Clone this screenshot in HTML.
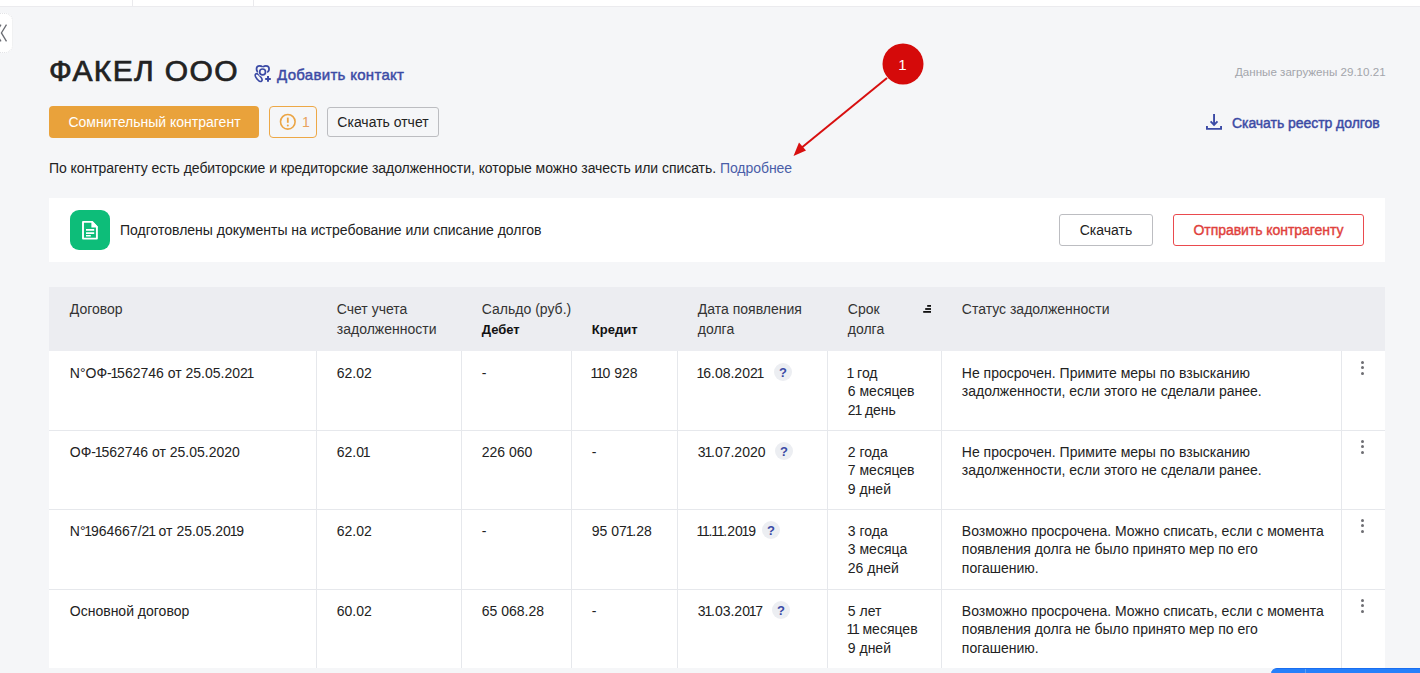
<!DOCTYPE html>
<html><head><meta charset="utf-8"><style>
*{box-sizing:border-box;margin:0;padding:0}
html,body{width:1420px;height:673px;overflow:hidden;background:#f5f6f8;font-family:"Liberation Sans",sans-serif;color:#222}
.abs{position:absolute}
.topbar{left:0;top:0;width:1420px;height:7px;background:#fff;border-bottom:1px solid #ebebee}
.vsep{top:0;width:1px;height:6px;background:#eaeaed}
.backtab{left:-14px;top:13px;width:27px;height:40px;background:#fff;border-radius:8px;border:1px dotted #e2e3e6}
.title{left:49px;top:58px;font-size:30px;color:#222;white-space:nowrap;-webkit-text-stroke:0.7px #222;letter-spacing:1.35px}
.addc{font-size:15px;color:#3b4aa5;white-space:nowrap;-webkit-text-stroke:0.45px #3b4aa5;letter-spacing:0.3px}
.loaded{left:1235px;top:66px;font-size:11.6px;color:#a3a5ab;white-space:nowrap}
.btn-orange{left:49px;top:106px;width:210px;height:32px;background:#e9a23b;border-radius:4px;color:#fff;font-size:14px;text-align:center;line-height:32px;padding-left:1px}
.warn{left:269px;top:106px;width:48px;height:32px;border:1px solid #eda847;border-radius:4px}
.btn-gray{left:327px;top:107px;width:112px;height:30px;border:1px solid #bcbdc1;border-radius:3px;font-size:14px;text-align:center;line-height:28px;color:#222}
.reestr{font-size:14px;color:#3b4aa5;white-space:nowrap;-webkit-text-stroke:0.45px #3b4aa5;letter-spacing:-0.05px}
.para{font-size:14px;white-space:nowrap;color:#222;letter-spacing:-0.05px}
.para span{color:#4a5ea8}
.panel{left:49px;top:198px;width:1336px;height:64px;background:#fff}
.gicon{left:70px;top:210px;width:40px;height:40px;border-radius:9px;background:#0dbd79}
.ptext{left:120px;top:222px;font-size:14px;white-space:nowrap}
.btn-dl{left:1059px;top:214px;width:94px;height:32px;border:1px solid #bcbdc1;border-radius:3px;font-size:14px;text-align:center;line-height:30px}
.btn-send{left:1173px;top:214px;width:191px;height:32px;border:1px solid #ea4a4e;border-radius:3px;font-size:14px;text-align:center;line-height:30px;color:#e0413c;-webkit-text-stroke:0.4px #e0413c;letter-spacing:-0.05px}
.thead{left:49px;top:287px;width:1336px;height:64px;background:#ecedf1}
.tbody{left:49px;top:351px;width:1336px;height:317px;background:#fff}
.th{font-size:14px;color:#333;line-height:20px;white-space:nowrap}
.th b{font-size:13px;color:#111}
.td{font-size:14px;color:#222;line-height:18.3px;white-space:nowrap}
.hl{height:1px;background:#e6e8ec;left:49px;width:1336px}
.vl{width:1px;background:#e6e8ec}
.q{position:absolute;width:18px;height:18px;border-radius:50%;background:#eceef2;color:#3b4aa5;font-weight:bold;font-size:13px;text-align:center;line-height:19px}
.n1{margin-left:-1.2px;letter-spacing:-1.2px}
.dot{position:absolute;width:3px;height:3px;border-radius:50%;background:#6e6e73}
.bluebar{left:1271px;top:668px;width:160px;height:10px;background:#2680fa;border-radius:6px 0 0 0;border-top:1px solid #1a6ef0}
.bluesep{left:1305px;top:669px;width:1px;height:5px;background:#5aa0f5}
</style></head><body>
<div class="abs topbar"></div><div class="abs vsep" style="left:132px"></div><div class="abs vsep" style="left:253px"></div>
<div class="abs backtab"></div>
<svg class="abs" style="left:0;top:10px" width="20" height="46" viewBox="0 0 20 46"><polyline points="6.5,14.7 1.4,22.9 6.5,31.4" fill="none" stroke="#6b6d73" stroke-width="1.3"/><polyline points="1,14.7 -4,22.9 1,31.4" fill="none" stroke="#6b6d73" stroke-width="1.3"/></svg>
<div class="abs title" style="left:49px;top:54px;">ФАКЕЛ ООО</div>
<svg class="abs" style="left:250px;top:60px" width="26" height="26" viewBox="0 0 26 26" fill="none" stroke="#3b4aa5" stroke-width="1.7">
<circle cx="9.7" cy="9.1" r="3.2"/>
<circle cx="15.9" cy="9.1" r="3.2"/>
<ellipse cx="8.6" cy="17.6" rx="4.6" ry="2.1" transform="rotate(50 8.6 17.6)"/>
<circle cx="12.6" cy="11.9" r="4.6" stroke="none" fill="#f5f6f8"/>
<circle cx="12.6" cy="11.9" r="2.9"/>
<path d="M15.2,18.9 H20.8 M18,16.1 V21.7" stroke-width="2"/>
</svg>
<div class="abs addc" style="left:277px;top:65.5px;">Добавить контакт</div>
<div class="abs loaded" style="left:1235px;top:65px;">Данные загружены 29.10.21</div>
<div class="abs btn-orange" style="left:49px;top:106px;">Сомнительный контрагент</div>
<div class="abs warn"></div>
<svg class="abs" style="left:278px;top:112px" width="20" height="20" viewBox="0 0 20 20"><circle cx="9.8" cy="9.8" r="7.3" fill="none" stroke="#eba545" stroke-width="1.6"/><path d="M9.8,5.6 V10.8" stroke="#eba545" stroke-width="1.8"/><circle cx="9.8" cy="13.5" r="1" fill="#eba545"/></svg>
<div class="abs" style="left:302px;top:114px;font-size:14px;color:#e8a25e">1</div>
<div class="abs btn-gray" style="left:327px;top:107px;">Скачать отчет</div>
<svg class="abs" style="left:1200px;top:108px" width="30" height="28" viewBox="0 0 30 28" fill="none" stroke="#3b4aa5" stroke-width="1.9"><path d="M14.05,6 V16.3"/><polyline points="10.6,13.4 14.05,16.9 17.5,13.4"/><polyline points="6.95,18 6.95,20.9 21.05,20.9 21.05,18"/></svg>
<div class="abs reestr" style="left:1232px;top:114.5px;">Скачать реестр долгов</div>
<div class="abs para" style="left:49px;top:160px;">По контрагенту есть дебиторские и кредиторские задолженности, которые можно зачесть или списать. <span>Подробнее</span></div>
<svg class="abs" style="left:780px;top:35px" width="160" height="130" viewBox="0 0 160 130"><line x1="107" y1="43" x2="20" y2="114" stroke="#d80f0f" stroke-width="2"/><polygon points="13.5,121 19,107.5 26,115.5" fill="#d80f0f"/><circle cx="123" cy="29" r="20.5" fill="#d50a0a"/><text x="122.5" y="34.5" font-family="Liberation Sans" font-size="15" fill="#fff" text-anchor="middle">1</text></svg>
<div class="abs panel"></div><div class="abs gicon"></div>
<svg class="abs" style="left:70px;top:210px" width="40" height="40" viewBox="0 0 40 40" fill="none" stroke="#fff"><path d="M13,11.9 H22.2 L26.9,16.8 V28.6 H13 Z" stroke-width="1.9" stroke-linejoin="round"/><path d="M21.4,11.2 H22.4 L27.6,16.6 V17.6 H21.4 Z" fill="#fff" stroke="none"/><path d="M16,19.9 H24.2 M16,23.1 H24.2 M16,25.8 H20.8" stroke-width="1.6"/></svg>
<div class="abs ptext" style="left:120px;top:222px;">Подготовлены документы на истребование или списание долгов</div>
<div class="abs btn-dl" style="left:1059px;top:214px;">Скачать</div>
<div class="abs btn-send" style="left:1173px;top:214px;">Отправить контрагенту</div>
<div class="abs thead"></div><div class="abs tbody"></div>
<div class="abs th" style="left:69.8px;top:299px;">Договор</div>
<div class="abs th" style="left:336.8px;top:299px;">Счет учета<br>задолженности</div>
<div class="abs th" style="left:481.8px;top:299px;">Сальдо (руб.)<br><b>Дебет</b></div>
<div class="abs th" style="left:591.8px;top:299px;"><br><b>Кредит</b></div>
<div class="abs th" style="left:697.8px;top:299px;">Дата появления<br>долга</div>
<div class="abs th" style="left:847.8px;top:299px;">Срок<br>долга</div>
<div class="abs th" style="left:961.8px;top:299px;">Статус задолженности</div>
<svg class="abs" style="left:920px;top:303px" width="14" height="12" viewBox="0 0 14 12" fill="#111"><rect x="7.2" y="2" width="3.8" height="1.8"/><rect x="5.2" y="5.1" width="5.8" height="1.8"/><rect x="3.2" y="8" width="7.8" height="1.8"/></svg>
<div class="abs vl" style="left:316px;top:351px;height:317px"></div>
<div class="abs vl" style="left:461px;top:351px;height:317px"></div>
<div class="abs vl" style="left:571px;top:351px;height:317px"></div>
<div class="abs vl" style="left:677px;top:351px;height:317px"></div>
<div class="abs vl" style="left:827px;top:351px;height:317px"></div>
<div class="abs vl" style="left:941px;top:351px;height:317px"></div>
<div class="abs vl" style="left:1341px;top:351px;height:317px"></div>
<div class="abs hl" style="top:430px"></div>
<div class="abs hl" style="top:509px"></div>
<div class="abs hl" style="top:589px"></div>
<div class="abs td" style="left:69.8px;top:364px;">N°ОФ-<span class="n1">1</span>562746 от 25.05.202<span class="n1">1</span></div>
<div class="abs td" style="left:336.8px;top:364px;">62.02</div>
<div class="abs td" style="left:481.8px;top:364px;">-</div>
<div class="abs td" style="left:591.8px;top:364px;"><span class="n1">1</span><span class="n1">1</span>0 928</div>
<div class="abs td" style="left:697.8px;top:364px;"><span class="n1">1</span>6.08.202<span class="n1">1</span></div>
<div class="abs td" style="left:847.8px;top:364px;"><span class="n1">1</span> год<br>6 месяцев<br>2<span class="n1">1</span> день</div>
<div class="abs td" style="left:961.8px;top:364px;">Не просрочен. Примите меры по взысканию<br>задолженности, если этого не сделали ранее.</div>
<div class="q" style="left:774px;top:362.7px">?</div>
<div class="dot" style="left:1360.5px;top:361.0px"></div>
<div class="dot" style="left:1360.5px;top:365.9px"></div>
<div class="dot" style="left:1360.5px;top:372.0px"></div>
<div class="abs td" style="left:69.8px;top:443px;">ОФ-<span class="n1">1</span>562746 от 25.05.2020</div>
<div class="abs td" style="left:336.8px;top:443px;">62.0<span class="n1">1</span></div>
<div class="abs td" style="left:481.8px;top:443px;">226 060</div>
<div class="abs td" style="left:591.8px;top:443px;">-</div>
<div class="abs td" style="left:697.8px;top:443px;">3<span class="n1">1</span>.07.2020</div>
<div class="abs td" style="left:847.8px;top:443px;">2 года<br>7 месяцев<br>9 дней</div>
<div class="abs td" style="left:961.8px;top:443px;">Не просрочен. Примите меры по взысканию<br>задолженности, если этого не сделали ранее.</div>
<div class="q" style="left:775px;top:441.7px">?</div>
<div class="dot" style="left:1360.5px;top:440.0px"></div>
<div class="dot" style="left:1360.5px;top:444.9px"></div>
<div class="dot" style="left:1360.5px;top:451.0px"></div>
<div class="abs td" style="left:69.8px;top:522px;">N°<span class="n1">1</span>964667/2<span class="n1">1</span> от 25.05.20<span class="n1">1</span>9</div>
<div class="abs td" style="left:336.8px;top:522px;">62.02</div>
<div class="abs td" style="left:481.8px;top:522px;">-</div>
<div class="abs td" style="left:591.8px;top:522px;">95 07<span class="n1">1</span>.28</div>
<div class="abs td" style="left:697.8px;top:522px;"><span class="n1">1</span><span class="n1">1</span>.<span class="n1">1</span><span class="n1">1</span>.20<span class="n1">1</span>9</div>
<div class="abs td" style="left:847.8px;top:522px;">3 года<br>3 месяца<br>26 дней</div>
<div class="abs td" style="left:961.8px;top:522px;">Возможно просрочена. Можно списать, если с момента<br>появления долга не было принято мер по его<br>погашению.</div>
<div class="q" style="left:762px;top:520.7px">?</div>
<div class="dot" style="left:1360.5px;top:519.0px"></div>
<div class="dot" style="left:1360.5px;top:523.9px"></div>
<div class="dot" style="left:1360.5px;top:530.0px"></div>
<div class="abs td" style="left:69.8px;top:602px;">Основной договор</div>
<div class="abs td" style="left:336.8px;top:602px;">60.02</div>
<div class="abs td" style="left:481.8px;top:602px;">65 068.28</div>
<div class="abs td" style="left:591.8px;top:602px;">-</div>
<div class="abs td" style="left:697.8px;top:602px;">3<span class="n1">1</span>.03.20<span class="n1">1</span>7</div>
<div class="abs td" style="left:847.8px;top:602px;">5 лет<br><span class="n1">1</span><span class="n1">1</span> месяцев<br>9 дней</div>
<div class="abs td" style="left:961.8px;top:602px;">Возможно просрочена. Можно списать, если с момента<br>появления долга не было принято мер по его<br>погашению.</div>
<div class="q" style="left:772px;top:600.7px">?</div>
<div class="dot" style="left:1360.5px;top:599.0px"></div>
<div class="dot" style="left:1360.5px;top:603.9px"></div>
<div class="dot" style="left:1360.5px;top:610.0px"></div>
<div class="abs bluebar"></div><div class="abs bluesep"></div>
</body></html>
